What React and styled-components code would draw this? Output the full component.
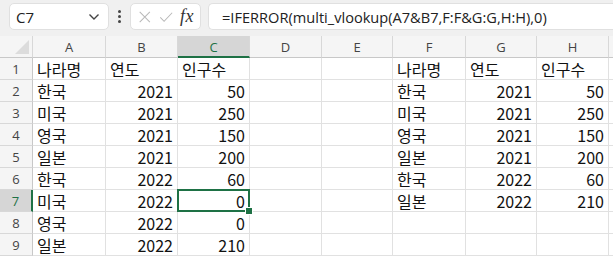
import React from "react";
import styled, { createGlobalStyle, css } from "styled-components";

const GlobalStyle = createGlobalStyle`
  html, body {
    margin: 0;
    padding: 0;
    background: #ffffff;
    overflow: hidden;
  }
  body {
    font-family: "Noto Sans CJK KR", "Noto Sans", sans-serif;
  }
`;

const green = "#1e7145";
const colWidths = [33, 73, 72, 72, 72, 71, 73, 71, 72, 40];
const colNames = ["A", "B", "C", "D", "E", "F", "G", "H", ""];

const left = [
  ["나라명", "연도", "인구수"],
  ["한국", 2021, 50],
  ["미국", 2021, 250],
  ["영국", 2021, 150],
  ["일본", 2021, 200],
  ["한국", 2022, 60],
  ["미국", 2022, 0],
  ["영국", 2022, 0],
  ["일본", 2022, 210],
];

const right = [
  ["나라명", "연도", "인구수"],
  ["한국", 2021, 50],
  ["미국", 2021, 250],
  ["영국", 2021, 150],
  ["일본", 2021, 200],
  ["한국", 2022, 60],
  ["일본", 2022, 210],
];

const Page = styled.div`
  width: 613px;
  height: 258px;
  overflow: hidden;
  background: #fff;
`;

const Toolbar = styled.div`
  display: flex;
  align-items: center;
  height: 36px;
  padding: 0 0 3px 9px;
  box-sizing: border-box;
  background: #f0f0f0;
`;

const NameBox = styled.div`
  display: flex;
  align-items: center;
  justify-content: space-between;
  width: 100px;
  height: 27px;
  box-sizing: border-box;
  padding: 0 8px 0 6px;
  background: #fff;
  border: 1px solid #e0e0e0;
  border-radius: 5px;
  font-family: "Open Sans", "Noto Sans", sans-serif;
  font-size: 15px;
  color: #222;
`;

const Dots = styled.div`
  display: flex;
  flex-direction: column;
  gap: 2px;
  margin: 0 9px 0 9px;
  span {
    width: 3px;
    height: 3px;
    border-radius: 50%;
    background: #444;
  }
`;

const FxBox = styled.div`
  display: flex;
  align-items: center;
  gap: 7px;
  width: 71px;
  height: 27px;
  box-sizing: border-box;
  padding: 0 6px 0 7px;
  background: #fff;
  border: 1px solid #e0e0e0;
  border-radius: 5px;
`;

const Fx = styled.span`
  margin-left: auto;
  font-family: "Liberation Serif", serif;
  font-style: italic;
  font-size: 18px;
  color: #333;
  letter-spacing: 0.5px;
`;

const FormulaBar = styled.div`
  flex: 1;
  display: flex;
  align-items: center;
  height: 27px;
  margin-left: 7px;
  padding-left: 13px;
  box-sizing: border-box;
  background: #fff;
  border: 1px solid #e0e0e0;
  border-right: none;
  border-radius: 5px 0 0 5px;
  font-family: "Open Sans", "Noto Sans", sans-serif;
  font-size: 14.6px;
  color: #222;
  white-space: nowrap;
  overflow: hidden;
`;

const Sheet = styled.div`
  display: grid;
  grid-template-columns: ${colWidths.map((w) => w + "px").join(" ")};
  grid-template-rows: 22px repeat(9, 22px);
`;

const ColHead = styled.div`
  position: relative;
  display: flex;
  align-items: center;
  justify-content: center;
  box-sizing: border-box;
  background: ${(p) => (p.$active ? "#d6d6d6" : "#f5f5f5")};
  border-right: 1px solid #d8d8d8;
  border-bottom: ${(p) => (p.$active ? `2px solid ${green}` : "1px solid #c8c8c8")};
  font-family: "Open Sans", "Noto Sans", sans-serif;
  font-size: 13px;
  color: ${(p) => (p.$active ? green : "#444")};
  padding-top: ${(p) => (p.$active ? "1px" : "0")};
`;

const Corner = styled(ColHead)`
  &::after {
    content: "";
    position: absolute;
    right: 3px;
    bottom: 3px;
    width: 0;
    height: 0;
    border-left: 14px solid transparent;
    border-bottom: 14px solid #dcdcdc;
  }
`;

const RowHead = styled.div`
  display: flex;
  align-items: center;
  justify-content: center;
  box-sizing: border-box;
  background: ${(p) => (p.$active ? "#d6d6d6" : "#f5f5f5")};
  border-right: ${(p) => (p.$active ? `2px solid ${green}` : "1px solid #c8c8c8")};
  border-bottom: 1px solid #d8d8d8;
  font-family: "Open Sans", "Noto Sans", sans-serif;
  font-size: 13px;
  color: ${(p) => (p.$active ? green : "#444")};
  padding-top: 1px;
`;

const Cell = styled.div`
  position: relative;
  display: flex;
  align-items: flex-end;
  justify-content: ${(p) => (p.$num ? "flex-end" : "flex-start")};
  box-sizing: border-box;
  padding: 0 4px 0 4px;
  border-right: 1px solid #e1e1e1;
  border-bottom: 1px solid #e1e1e1;
  font-size: 16px;
  line-height: 20px;
  color: #111;
  white-space: nowrap;
  ${(p) =>
    p.$selected &&
    css`
      &::before {
        content: "";
        position: absolute;
        left: -1px;
        top: -1px;
        right: -1px;
        bottom: -1px;
        border: 2px solid ${green};
        pointer-events: none;
      }
      &::after {
        content: "";
        position: absolute;
        right: -4px;
        bottom: -4px;
        width: 6px;
        height: 6px;
        background: ${green};
        border: 1px solid #fff;
        z-index: 2;
      }
    `}
`;

function XIcon() {
  return (
    <svg width="16" height="16" viewBox="0 0 16 16">
      <path d="M2 2 L14 14 M14 2 L2 14" stroke="#b8b8b8" strokeWidth="1.2" fill="none" />
    </svg>
  );
}

function CheckIcon() {
  return (
    <svg width="17" height="16" viewBox="0 0 17 16">
      <path d="M1.5 8.5 L6 13 L15.5 3" stroke="#b8b8b8" strokeWidth="1.2" fill="none" />
    </svg>
  );
}

function Chevron() {
  return (
    <svg width="12" height="8" viewBox="0 0 12 8">
      <path d="M1.5 1.5 L6 6 L10.5 1.5" stroke="#444" strokeWidth="1.4" fill="none" />
    </svg>
  );
}

function valueAt(row, col) {
  // col index 0 = A
  if (col <= 2) {
    const r = left[row];
    return r ? r[col] : "";
  }
  if (col >= 5 && col <= 7) {
    const r = right[row];
    return r ? r[col - 5] : "";
  }
  return "";
}

export default function App() {
  const rows = [];
  for (let r = 0; r < 9; r++) {
    rows.push(
      <RowHead key={"rh" + r} $active={r === 6}>
        {r + 1}
      </RowHead>
    );
    for (let c = 0; c < 9; c++) {
      const v = valueAt(r, c);
      rows.push(
        <Cell key={r + "-" + c} $num={typeof v === "number"} $selected={r === 6 && c === 2}>
          {v}
        </Cell>
      );
    }
  }

  return (
    <Page>
      <GlobalStyle />
      <Toolbar>
        <NameBox>
          C7
          <Chevron />
        </NameBox>
        <Dots>
          <span />
          <span />
          <span />
        </Dots>
        <FxBox>
          <XIcon />
          <CheckIcon />
          <Fx>fx</Fx>
        </FxBox>
        <FormulaBar>=IFERROR(multi_vlookup(A7&amp;B7,F:F&amp;G:G,H:H),0)</FormulaBar>
      </Toolbar>
      <Sheet>
        <Corner />
        {colNames.map((n, i) => (
          <ColHead key={"ch" + i} $active={n === "C"}>
            {n}
          </ColHead>
        ))}
        {rows}
      </Sheet>
    </Page>
  );
}
